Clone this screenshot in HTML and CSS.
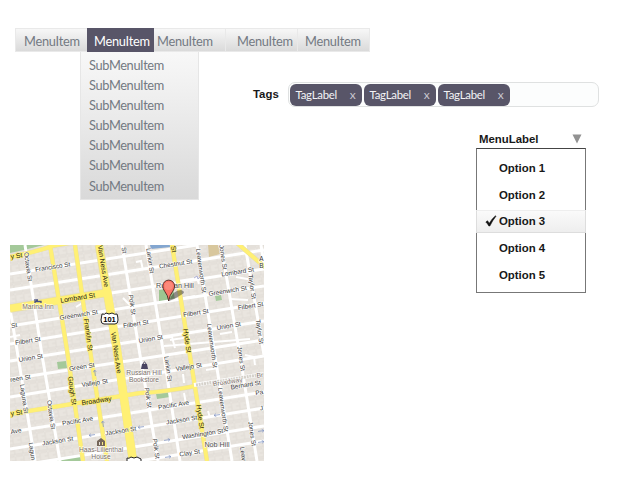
FILE: index.html
```html
<!DOCTYPE html>
<html lang="en">
<head>
<meta charset="utf-8">
<title>Menus, tags and map</title>
<link rel="stylesheet" href="styles.css">
</head>
<body>
<main class="page">
  <div class="left">
    <nav class="menu">
      <a class="item first">MenuItem</a>
      <a class="item active">MenuItem</a>
      <a class="item third">MenuItem</a>
      <a class="item fourth">MenuItem</a>
      <a class="item last">MenuItem</a>
    </nav>
    <div class="submenu">
      <a>SubMenuItem</a><a>SubMenuItem</a><a>SubMenuItem</a><a>SubMenuItem</a><a>SubMenuItem</a><a>SubMenuItem</a><a>SubMenuItem</a>
    </div>
    <svg class="map" viewBox="10 245 254 216" width="254" height="216">
      <defs>
        <pattern id="lots" width="8.2" height="10" patternUnits="userSpaceOnUse" patternTransform="translate(4 2) rotate(-8.8)">
          <rect width="8.2" height="10" fill="#e9e5df"/>
          <path d="M0 1H6V0M0 9H8M7.3 1V9M3.5 5H7" stroke="#dad6cf" stroke-width=".6" fill="none"/>
        </pattern>
        <path id="arrow" d="M-3 0H3M1 -1.4L3 0L1 1.4" fill="none" stroke="#899bc5" stroke-width=".8"/>
      </defs>
      <rect x="10" y="245" width="254" height="216" fill="url(#lots)"/>
      <g fill="#a4c99a">
        <path d="M10 245H44L24 250L10 253Z"/>
        <path fill="#9cc590" d="M159 290L173 288L175 300L159 302Z"/>
        <path d="M215 296L221 295L222 300L216 301ZM57 362L66 361L67 368L58 369ZM156 394L169 392L170 397L157 399ZM55 461L80 456L82 461Z"/>
      </g>
      <path fill="#83a6d0" d="M150 245H171V247L151 249Z"/>
      <path fill="#d8c79d" d="M208 245H218L220 254L209 257Z"/>
      <g class="streets">
        <path d="M10 274L197 245M10 290L264 250M105 294L264 269M10 326L264 286M10 344L264 303M10 361L264 321M10 379L264 340M10 397L264 356M10 432L264 392M10 449L264 408M10 467L264 426M120 464L264 441"/>
        <path d="M25 245L42 355L60 461M10 309L17 350L35 461M122 245L140 355L158 461M146 245L163 350L180 461M197 245L214 350L232 461M221 245L239 350L257 461M245 245L264 355M261 245L264 264"/>
        <path class="alley" d="M10 337L20 335M76 307L84 302M123 298L130 305M136 262L141 261L143 270M178 281L197 278L199 284M173 300L195 296M236 277L253 280M230 299L248 300M163 338L172 337L175 348M170 340L190 337M164 346L250 339M183 374L184 383M184 393L186 404M206 370L218 368M208 411L210 418M245 355L254 357L255 365M220 334L232 332"/>
      </g>
      <path class="casing" d="M10 257Q40 251 52 246L80 241M50 245L67 350L83 461M75 245L90 350L107 461M172 245L189 350L207 461M10 414L140 393Q165 392 195 386M237 243L266 268"/>
      <path class="casing wide" d="M99 245L107 292L117 350L133 461M10 308.5L105 293"/>
      <path class="road" d="M10 257Q40 251 52 246L80 241M50 245L67 350L83 461M75 245L90 350L107 461M172 245L189 350L207 461M10 414L140 393Q165 392 195 386M237 243L266 268"/>
      <path class="road avenue" d="M10 308.5L105 293M99 245L107 292"/>
      <path class="road avenue lower" d="M107 290L117 350L133 461"/>
      <path d="M194 385L264 374" fill="none" stroke="#fff" stroke-width="4"/>
      <path d="M196 385L264 374" fill="none" stroke="#d5d1ca" stroke-width="3" stroke-dasharray="2 .7"/>
      <use href="#arrow" transform="translate(141 427) rotate(172)"/>
      <use href="#arrow" transform="translate(217 415) rotate(172)"/>
      <use href="#arrow" transform="translate(92 435) rotate(172)"/>
      <use href="#arrow" transform="translate(167 440) rotate(-8)"/>
      <use href="#arrow" transform="translate(168 457) rotate(-8)"/>
      <use href="#arrow" transform="translate(261 431) rotate(-8)"/>
      <use href="#arrow" transform="translate(261 442) rotate(-8)"/>
      <use href="#arrow" transform="translate(95 373) rotate(-98)"/>
      <use href="#arrow" transform="translate(103 424) rotate(-98)"/>
      <g class="labels">
        <text class="major from" transform="translate(11 259) rotate(-9)">y St</text>
        <text transform="translate(53 269) rotate(-9)">Francisco St</text>
        <text class="major" transform="translate(78 300) rotate(-9)">Lombard St</text>
        <text transform="translate(79 317) rotate(-9)">Greenwich St</text>
        <text class="from" transform="translate(11.500 328) rotate(-9)">St</text>
        <text transform="translate(28 343) rotate(-9)">Filbert St</text>
        <text transform="translate(136 326) rotate(-9)">Filbert St</text>
        <text transform="translate(31 360) rotate(-9)">Union St</text>
        <text class="from" transform="translate(10.500 382) rotate(-9)">reen St</text>
        <text transform="translate(82 369) rotate(-9)">Green St</text>
        <text transform="translate(95 385) rotate(-9)">Vallejo St</text>
        <text class="major" transform="translate(97 403) rotate(-9)">Broadway</text>
        <text class="major from" transform="translate(11 416) rotate(-9)">y St</text>
        <text transform="translate(78 423) rotate(-9)">Pacific Ave</text>
        <text class="from" transform="translate(11 434) rotate(-9)">Ave</text>
        <text transform="translate(58 443) rotate(-9)">Jackson St</text>
        <text transform="translate(121 433) rotate(-9)">Jackson St</text>
        <text transform="translate(176 266) rotate(-9)">Chestnut St</text>
        <text transform="translate(238 274) rotate(-9)">Lombard St</text>
        <text transform="translate(228 293) rotate(-9)">Greenwich St</text>
        <text class="to" transform="translate(263.500 306) rotate(-9)">Filbert St</text>
        <text transform="translate(196 315) rotate(-9)">Filbert St</text>
        <text transform="translate(229 328) rotate(-9)">Union St</text>
        <text transform="translate(151 341) rotate(-9)">Union St</text>
        <text transform="translate(189 369) rotate(-9)">Vallejo St</text>
        <text class="place" transform="translate(228 384) rotate(-9)">Broadway</text>
        <text transform="translate(246 387) rotate(-9)">Bernard St</text>
        <text transform="translate(174 407) rotate(-9)">Pacific Ave</text>
        <text class="to" transform="translate(263.500 394) rotate(-9)">Pa</text>
        <text transform="translate(182 422) rotate(-9)">Jackson St</text>
        <text class="to" transform="translate(263.500 410) rotate(-9)">J</text>
        <text transform="translate(203 436) rotate(-9)">Washington St</text>
        <text transform="translate(190 455) rotate(-9)">Clay St</text>
        <text class="to" x="263.500" y="261">A</text>
        <text class="to" x="263.500" y="268">B</text>
        <text class="place to" transform="translate(263.500 377) rotate(-6)">Br</text>
        <text transform="translate(26 267) rotate(82)">Octavia St</text>
        <text class="major" transform="translate(101 266.500) rotate(81)">Van Ness Ave</text>
        <text class="major" transform="translate(114 353) rotate(82)">Van Ness Ave</text>
        <text class="major" transform="translate(86 335) rotate(82)">Franklin St</text>
        <text transform="translate(130 305) rotate(82)">Polk St</text>
        <text transform="translate(122 250.500) rotate(82)">St</text>
        <text class="major" transform="translate(70 391) rotate(82)">Gough St</text>
        <text transform="translate(22 399) rotate(82)">Laguna St</text>
        <text transform="translate(49 415) rotate(82)">Octavia St</text>
        <text transform="translate(30 451.500) rotate(82)">Lagun</text>
        <text transform="translate(148 261) rotate(82)">Larkin St</text>
        <text transform="translate(199 271) rotate(82)">Leavenworth St</text>
        <text transform="translate(221 257.500) rotate(82)">Jones St</text>
        <text transform="translate(250 287) rotate(82)">Taylor St</text>
        <text transform="translate(257.500 332) rotate(82)">Taylor St</text>
        <text transform="translate(210 346) rotate(82)">Leavenworth St</text>
        <text transform="translate(239 359) rotate(82)">Jones St</text>
        <text class="major" transform="translate(185 341) rotate(82)">Hyde St</text>
        <text class="major" transform="translate(171.500 249.500) rotate(82)">St</text>
        <text transform="translate(166 369) rotate(82)">Larkin St</text>
        <text transform="translate(146 398) rotate(82)">Polk St</text>
        <text transform="translate(154 449) rotate(82)">Polk St</text>
        <text class="major" transform="translate(198 417) rotate(82)">Hyde St</text>
        <text transform="translate(221 410) rotate(82)">Leavenworth St</text>
        <text transform="translate(250 434) rotate(82)">Jones St</text>
        <text transform="translate(241 454) rotate(82)">Leav</text>
        <text class="place" x="38" y="309">Marina Inn</text>
        <text class="place" x="144" y="375">Russian Hill</text>
        <text class="place" x="144" y="382">Bookstore</text>
        <text class="place" x="101" y="452">Haas-Lilienthal</text>
        <text class="place" x="101" y="459">House</text>
        <text class="area" x="175" y="288">Russian Hill</text>
        <text class="area" x="217" y="447">Nob Hill</text>
      </g>
      <path d="M35 299V303M35 301.5H41V303M36 300H38" fill="none" stroke="#495183" stroke-width="1.3"/>
      <path fill="#494461" d="M142 364H147L148 369H141Z"/><path d="M143 364Q144.500 360 146 364" fill="none" stroke="#494461"/>
      <path fill="#756659" d="M97 441L101 438L105 441V446H97ZM99 442V445H100V442ZM102 442V445H103V442Z"/>
      <path d="M194 278L197 276L198 279L200 277" fill="none" stroke="#aeb2db"/>
      <path d="M102 314Q105 315 106 313Q109 315 112 313Q115 315 117 314Q118 317 118 320Q118 324 115 324H104Q101 324 101 320Z" fill="#fff" stroke="#222"/>
      <text x="109.500" y="322" class="route">101</text>
      <path d="M127 458Q129 459 131 457Q134 459 137 457L141 459V464H127Z" fill="#fff" stroke="#222"/>
      <path d="M169 301Q173 290 181 290Q187 292 181 295Q175 299 169 301Z" fill="#222" opacity=".45"/>
      <path d="M168.700 301Q167.800 295 164.800 291.500Q162.800 289 162.800 286A5.900 5.900 0 0 1 174.600 286Q174.600 289 172.600 291.500Q169.600 295 168.700 301Z" fill="#fb7466" stroke="#3b1714" stroke-width=".8"/>
      <circle cx="168.700" cy="286" r="4.100" fill="#fb897b"/>
    </svg>
  </div>
  <div class="right">
    <div class="tag-row">
      <label class="heading">Tags</label>
      <div class="tag-input">
        <span class="tag">TagLabel<i>x</i></span><span class="tag">TagLabel<i>x</i></span><span class="tag">TagLabel<i>x</i></span>
      </div>
    </div>
    <div class="select">
      <div class="select-head"><span>MenuLabel</span><svg width="10" height="10" viewBox="0 0 10 10"><path d="M.5 .5H9.500L5 9.500Z" fill="#929292"/></svg></div>
      <div class="options">
        <div class="option">Option 1</div>
        <div class="option">Option 2</div>
        <div class="option chosen"><svg width="12" height="12" viewBox="0 0 12 12"><path d="M.8 7L2.500 5.700L4.300 8.200Q7 3.500 10.500 .7L11 1.200Q7.500 5.500 4.900 11H3.800Q2.500 8.500 .8 7Z" fill="#111" stroke="#111" stroke-width=".5"/></svg>Option 3</div>
        <div class="option">Option 4</div>
        <div class="option">Option 5</div>
      </div>
    </div>
  </div>
</main>
</body>
</html>
```

FILE: styles.css
```css
* { box-sizing: border-box; }
body { margin: 0; background: #fff; color: #181818; font-family: "Liberation Sans", Arial, sans-serif; }
.page { width: 636px; height: 480px; display: grid; grid-template-columns: 10px 243px 383px; overflow: hidden; }
.left { grid-column: 2; grid-row: 1; padding-top: 28px; }
.right { grid-column: 3; grid-row: 1; padding-top: 82px; }
.menu { display: flex; width: 355px; height: 24px; margin-left: 5px; background: linear-gradient(#f7f7f7, #dadada); border: 1px solid #e9e9e9; font: 12.8px/26px Lato, sans-serif; color: #737982; }
.item { margin-top: -1px; height: 24px; letter-spacing: -.25px; white-space: nowrap; }
.first { width: 71px; padding-left: 8px; }
.active { width: 67px; padding-left: 7px; background: #585568; color: #fff; }
.third { width: 72px; padding-left: 3px; border-right: 1px solid #e9e9e9; }
.fourth { width: 72px; padding-left: 11px; border-right: 1px solid #e9e9e9; }
.last { padding-left: 7px; }
.submenu { width: 119px; height: 148px; margin-left: 70px; padding: 3px 8px; background: linear-gradient(#f8f8f8, #d9d9d9); border: 1px solid #e6e6e6; border-top: 0; }
.submenu a { display: block; font: 12.8px/20.1px Lato, sans-serif; color: #737982; letter-spacing: -.35px; }
.map { display: block; width: 254px; height: 216px; margin-top: 45px; }
.streets { fill: none; stroke: #fff; stroke-width: 3; }
.alley { stroke-width: 2; }
.casing { fill: none; stroke: #e6dda6; stroke-width: 4.6; }
.casing.wide { stroke-width: 8.6; }
.road { fill: none; stroke: #fff074; stroke-width: 3.8; }
.road.avenue { stroke-width: 7.2; }
.road.lower { stroke-width: 8.2; }
.labels { font-size: 6.4px; fill: #353535; text-anchor: middle; stroke: rgba(255,255,255,.75); stroke-width: 1.3px; paint-order: stroke; stroke-linejoin: round; }
.from { text-anchor: start; }
.to { text-anchor: end; }
.major { fill: #1c1a12; font-size: 6.8px; stroke: #fff074; }
.place { fill: #7c706b; font-size: 6.7px; }
.area { fill: #505050; font-size: 7.2px; }
.route { font-size: 7.5px; font-weight: bold; text-anchor: middle; }
.tag-row { display: flex; align-items: center; height: 25px; }
.heading { width: 35px; font-size: 11.4px; font-weight: bold; padding-bottom: 1px; }
.tag-input { display: flex; gap: 2.5px; width: 311px; height: 25px; padding: 1px; background: #fcfdfd; border: 1px solid #dfe1e1; border-radius: 7px; }
.tag { display: flex; justify-content: space-between; width: 71.500px; height: 22px; padding: 0 6px 0 5.5px; border-radius: 6px; background: #585568; color: #f3f3f6; font: 11.4px/22px Lato, sans-serif; letter-spacing: -.25px; }
.tag i { font-style: normal; color: #c8c7cf; font-size: 12px; line-height: 21px; }
.select { width: 110px; margin-left: 223px; margin-top: 25px; font-weight: bold; font-size: 11.4px; }
.select-head { display: flex; justify-content: space-between; align-items: center; height: 16px; padding: 0 4px 0 3px; margin-top: -1px; }
.select-head svg { margin-top: -1px; }
.options { height: 145px; margin-top: 1px; border: 1px solid #777; border-top-color: #444; padding-top: 6px; }
.option { height: 26.800px; line-height: 27px; padding-left: 22px; }
.chosen { display: flex; align-items: center; height: 23px; line-height: 24px; margin: 1px -1px 2.800px; padding-left: 8px; border: 1px solid #ddd; border-top-color: #eee; background: linear-gradient(#fafafa, #eee); }
.chosen svg { margin-right: 2px; }
```
